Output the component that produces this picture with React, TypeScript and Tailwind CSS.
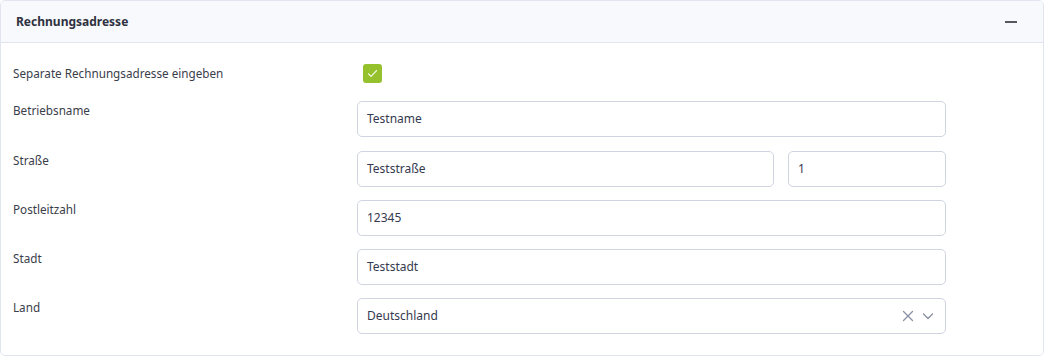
import React from "react";

const font = { fontFamily: '"Noto Sans", "Segoe UI", sans-serif' };

function Field({ value, className = "" }: { value: string; className?: string }) {
  return (
    <div
      className={`h-[36px] rounded-[5px] border border-[#cfd4e0] bg-white flex items-center px-[9px] text-[12px] text-[#363a4f] ${className}`}
    >
      {value}
    </div>
  );
}

function Row({ label, children, className = "" }: { label: string; children: React.ReactNode; className?: string }) {
  return (
    <div className={`flex ${className}`}>
      <div className="w-[344px] pt-[1px] leading-[16px] text-[11.7px] text-[#3a3d4a]">{label}</div>
      <div className="w-[589px]">{children}</div>
    </div>
  );
}

export default function App() {
  return (
    <div className="w-[1044px] h-[356px] bg-white" style={font}>
      <div className="w-[1044px] h-[356px] rounded-[5px] border border-[#e1e5ef] overflow-hidden">
        <div className="h-[42px] bg-[#f8f9fc] border-b border-[#e1e5ef] flex items-center justify-between pl-[15px] pr-[26px]">
          <span className="text-[12px] font-bold text-[#2f3140]">Rechnungsadresse</span>
          <span className="block w-[12px] h-[2px] bg-[#555860]" />
        </div>
        <div className="pl-[12px] pt-[21px] flex flex-col">
          <div className="flex items-center h-[19px]">
            <div className="w-[344px] text-[11.7px] text-[#3a3d4a] leading-[16px] -mt-[1px]">Separate Rechnungsadresse eingeben</div>
            <div className="ml-[6px] w-[19px] h-[19px] rounded-[3px] bg-[#95c22c] flex items-center justify-center">
              <svg width="13" height="13" viewBox="0 0 16 16" fill="none">
                <path d="M3 8.5l3.2 3L13 4.5" stroke="white" strokeWidth="1.3" strokeLinecap="round" strokeLinejoin="round" />
              </svg>
            </div>
          </div>
          <div className="mt-[18px] flex flex-col gap-[13px]">
            <Row label="Betriebsname">
              <Field value="Testname" />
            </Row>
            <Row label="Straße" className="mt-[1px]">
              <div className="flex gap-[14px]">
                <Field value="Teststraße" className="w-[417px]" />
                <Field value="1" className="flex-1" />
              </div>
            </Row>
            <Row label="Postleitzahl">
              <Field value="12345" />
            </Row>
            <Row label="Stadt">
              <Field value="Teststadt" />
            </Row>
            <Row label="Land">
              <div className="h-[36px] rounded-[5px] border border-[#cfd4e0] bg-white flex items-center pl-[9px] pr-[10px] text-[12px] text-[#363a4f]">
                <span className="flex-1">Deutschland</span>
                <svg width="14" height="14" viewBox="0 0 14 14" className="mr-[6px]">
                  <path d="M2.5 2.5l9 9M11.5 2.5l-9 9" stroke="#8a90a3" strokeWidth="1.3" strokeLinecap="round" />
                </svg>
                <svg width="14" height="14" viewBox="0 0 14 14">
                  <path d="M2.5 5l4.5 4.5L11.5 5" stroke="#8a90a3" strokeWidth="1.3" fill="none" strokeLinecap="round" strokeLinejoin="round" />
                </svg>
              </div>
            </Row>
          </div>
        </div>
      </div>
    </div>
  );
}
